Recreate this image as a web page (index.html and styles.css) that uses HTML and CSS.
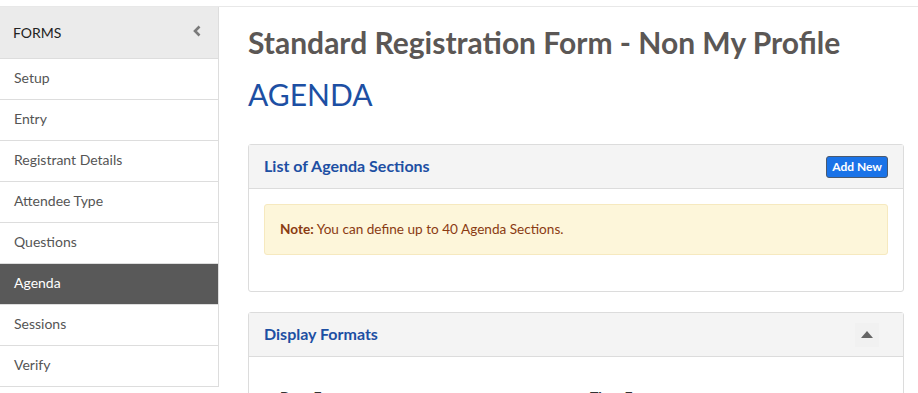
FILE: index.html
```html
<!DOCTYPE html>
<html>
<head>
  <title>Standard Registration Form - Agenda</title>
  <link rel="stylesheet" href="styles.css">
</head>
<body>
  <div class="layout">
    <div class="sidebar">
      <div class="sidebar-head">
        <span>FORMS</span>
        <svg class="chevron" width="10" height="12" viewBox="0 0 10 12">
          <path d="M7.5 1.5 L3 6 L7.5 10.5" fill="none" stroke="#7a7a7a" stroke-width="2.6"/>
        </svg>
      </div>
      <a class="nav-item" href="#">Setup</a>
      <a class="nav-item" href="#">Entry</a>
      <a class="nav-item" href="#">Registrant Details</a>
      <a class="nav-item" href="#">Attendee Type</a>
      <a class="nav-item" href="#">Questions</a>
      <a class="nav-item active" href="#">Agenda</a>
      <a class="nav-item" href="#">Sessions</a>
      <a class="nav-item" href="#">Verify</a>
    </div>

    <div class="main">
      <h1>Standard Registration Form - Non My Profile</h1>
      <h2>AGENDA</h2>

      <div class="panel">
        <div class="panel-head">
          <span class="panel-title">List of Agenda Sections</span>
          <button class="btn-add">Add New</button>
        </div>
        <div class="panel-body">
          <div class="note"><b>Note:</b> You can define up to 40 Agenda Sections.</div>
        </div>
      </div>

      <div class="panel">
        <div class="panel-head">
          <span class="panel-title">Display Formats</span>
          <span class="toggle">
            <svg width="12" height="7" viewBox="0 0 12 7"><path d="M6 0 L12 7 L0 7 Z" fill="#666"/></svg>
          </span>
        </div>
        <div class="formats">
          <label>Date Format</label>
          <label>Time Format</label>
        </div>
      </div>
    </div>
  </div>
</body>
</html>
```

FILE: styles.css
```css
body {
  margin: 0;
  font-family: Lato, "Open Sans", sans-serif;
  color: #555;
  background: #fff;
}

.layout {
  margin-top: 6px;
  border-top: 1px solid #e8e8e8;
  display: flex;
  align-items: flex-start;
}

/* Sidebar */
.sidebar {
  width: 218px;
  flex-shrink: 0;
  border-right: 1px solid #ddd;
}

.sidebar-head {
  height: 51px;
  background: #ebebeb;
  border-bottom: 1px solid #ddd;
  display: flex;
  align-items: center;
  justify-content: space-between;
  padding: 0 16px 0 13px;
  font-size: 14px;
  color: #222;
}

.chevron {
  margin-top: -4px;
}

.nav-item {
  display: block;
  height: 40px;
  line-height: 38px;
  padding-left: 14px;
  border-bottom: 1px solid #ddd;
  font-size: 14px;
  color: #555;
  text-decoration: none;
}

.nav-item.active {
  background: #595959;
  color: #fff;
}

/* Main */
.main {
  flex: 1;
  min-width: 0;
  padding: 0 14px 0 29px;
}

h1 {
  margin: 16px 0 0;
  font-size: 30px;
  font-weight: 700;
  color: #5b5755;
  line-height: 38px;
}

h2 {
  margin: 14px 0 0;
  font-size: 30px;
  font-weight: 400;
  color: #1d4fa3;
  line-height: 38px;
}

.panel {
  margin-top: 20px;
  border: 1px solid #dcdcdc;
  border-radius: 3px;
  background: #fff;
}

.main h2 + .panel {
  margin-top: 31px;
}

.panel-head {
  height: 43px;
  background: #f4f4f4;
  border-bottom: 1px solid #dcdcdc;
  display: flex;
  align-items: center;
  justify-content: space-between;
  padding: 0 15px;
}

.panel-title {
  font-size: 16px;
  font-weight: 700;
  color: #1d4fa3;
  margin-top: -2px;
}

.btn-add {
  background: #1a73e8;
  color: #fff;
  border: 1px solid #4a5a70;
  border-radius: 3px;
  font-family: inherit;
  font-size: 12px;
  font-weight: 700;
  padding: 0 5px;
  height: 22px;
}

.toggle {
  width: 24px;
  height: 24px;
  display: flex;
  align-items: center;
  justify-content: center;
  background: #f1f1f1;
  margin-right: 9px;
}

.panel-body {
  padding: 15px 15px 36px;
}

.note {
  background: #fdf6da;
  border: 1px solid #f6e9bf;
  border-radius: 3px;
  padding: 0 15px;
  height: 49px;
  line-height: 49px;
  font-size: 13.6px;
  color: #8a3b12;
}

.formats {
  display: flex;
  padding: 31px 0 10px 31px;
}

.formats label {
  width: 310px;
  font-size: 14px;
  font-weight: 700;
  color: #333;
}
```
